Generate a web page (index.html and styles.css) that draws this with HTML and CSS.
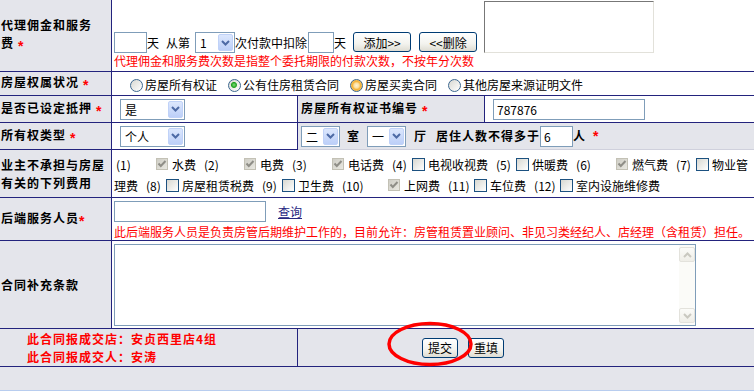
FILE: index.html
```html
<!DOCTYPE html>
<html lang="zh-CN">
<head>
    <meta charset="UTF-8">
    <meta name="viewport" content="width=device-width, initial-scale=1.0">
    <title>合同信息录入</title>
    <link rel="stylesheet" href="styles.css">
</head>
<body>

    <table class="form">
        <colgroup>
            <col class="col-label">
            <col class="col-a">
            <col class="col-b">
            <col>
        </colgroup>

        <!-- 代理佣金和服务费 -->
        <tr class="row-fee">
            <td class="label">代理佣金和服务<br>费<span class="req">*</span></td>
            <td colspan="3" class="fee-cell">
                <div class="fee-line">
                    <input type="text" class="txt days">
                    <span class="word">天</span>
                    <span class="word from">从第</span>
                    <span class="select sel-times">
                        <span class="select-val">1</span>
                        <span class="select-btn"><svg width="9" height="6" viewBox="0 0 9 6"><path d="M1 1l3.5 3.5L8 1"/></svg></span>
                    </span>
                    <span class="word">次付款中扣除</span>
                    <input type="text" class="txt days-short">
                    <span class="word">天</span>
                    <button class="btn btn-add">添加&gt;&gt;</button>
                    <button class="btn btn-del">&lt;&lt;删除</button>
                    <div class="fee-list"></div>
                </div>
                <div class="hint">代理佣金和服务费次数是指整个委托期限的付款次数，不按年分次数</div>
            </td>
        </tr>

        <!-- 房屋权属状况 -->
        <tr class="row-owner">
            <td class="label">房屋权属状况<span class="req">*</span></td>
            <td colspan="3" class="radio-cell">
                <div class="radio-line">
                    <span class="radio"></span><span class="radio-text">房屋所有权证</span>
                    <span class="radio on"></span><span class="radio-text">公有住房租赁合同</span>
                    <span class="radio hover"></span><span class="radio-text">房屋买卖合同</span>
                    <span class="radio"></span><span class="radio-text">其他房屋来源证明文件</span>
                </div>
            </td>
        </tr>

        <!-- 抵押 / 证书编号 -->
        <tr class="row-std">
            <td class="label">是否已设定抵押<span class="req">*</span></td>
            <td class="field">
                <span class="select sel-wide">
                    <span class="select-val">是</span>
                    <span class="select-btn"><svg width="9" height="6" viewBox="0 0 9 6"><path d="M1 1l3.5 3.5L8 1"/></svg></span>
                </span>
            </td>
            <td class="label sub-label">房屋所有权证书编号<span class="req">*</span></td>
            <td class="field">
                <input type="text" class="txt cert" value="787876">
            </td>
        </tr>

        <!-- 所有权类型 / 户型 -->
        <tr class="row-std">
            <td class="label">所有权类型<span class="req">*</span></td>
            <td class="field">
                <span class="select sel-wide">
                    <span class="select-val">个人</span>
                    <span class="select-btn"><svg width="9" height="6" viewBox="0 0 9 6"><path d="M1 1l3.5 3.5L8 1"/></svg></span>
                </span>
            </td>
            <td colspan="2" class="layout-cell">
                <div class="layout-line">
                    <span class="select sel-room">
                        <span class="select-val">二</span>
                        <span class="select-btn"><svg width="9" height="6" viewBox="0 0 9 6"><path d="M1 1l3.5 3.5L8 1"/></svg></span>
                    </span>
                    <span class="bold-word room">室</span>
                    <span class="select sel-room">
                        <span class="select-val">一</span>
                        <span class="select-btn"><svg width="9" height="6" viewBox="0 0 9 6"><path d="M1 1l3.5 3.5L8 1"/></svg></span>
                    </span>
                    <span class="bold-word hall">厅</span>
                    <span class="bold-word people">居住人数不得多于</span>
                    <input type="text" class="txt days" value="6">
                    <span class="bold-word">人</span>
                    <span class="req">*</span>
                </div>
            </td>
        </tr>

        <!-- 业主不承担的费用 -->
        <tr class="row-costs">
            <td class="label">业主不承担与房屋<br>有关的下列费用</td>
            <td colspan="3" class="costs-cell">
                <div class="cost-line">
                    <span class="num first">(1)</span><span class="cb locked"><svg width="10" height="10" viewBox="0 0 10 10"><path d="M1.5 4.5l2.3 2.5L8.5 2"/></svg></span><span class="cost-name">水费</span>
                    <span class="num">(2)</span><span class="cb locked"><svg width="10" height="10" viewBox="0 0 10 10"><path d="M1.5 4.5l2.3 2.5L8.5 2"/></svg></span><span class="cost-name">电费</span>
                    <span class="num">(3)</span><span class="cb locked"><svg width="10" height="10" viewBox="0 0 10 10"><path d="M1.5 4.5l2.3 2.5L8.5 2"/></svg></span><span class="cost-name">电话费</span>
                    <span class="num">(4)</span><span class="cb"></span><span class="cost-name">电视收视费</span>
                    <span class="num">(5)</span><span class="cb"></span><span class="cost-name">供暖费</span>
                    <span class="num">(6)</span><span class="cb locked"><svg width="10" height="10" viewBox="0 0 10 10"><path d="M1.5 4.5l2.3 2.5L8.5 2"/></svg></span><span class="cost-name">燃气费</span>
                    <span class="num">(7)</span><span class="cb"></span><span class="cost-name">物业管</span>
                </div>
                <div class="cost-line">
                    <span class="cost-name wrap">理费</span>
                    <span class="num">(8)</span><span class="cb"></span><span class="cost-name">房屋租赁税费</span>
                    <span class="num">(9)</span><span class="cb"></span><span class="cost-name">卫生费</span>
                    <span class="num wide">(10)</span><span class="cb locked"><svg width="10" height="10" viewBox="0 0 10 10"><path d="M1.5 4.5l2.3 2.5L8.5 2"/></svg></span><span class="cost-name">上网费</span>
                    <span class="num wide">(11)</span><span class="cb"></span><span class="cost-name">车位费</span>
                    <span class="num wide">(12)</span><span class="cb"></span><span class="cost-name">室内设施维修费</span>
                </div>
            </td>
        </tr>

        <!-- 后端服务人员 -->
        <tr class="row-staff">
            <td class="label">后端服务人员<span class="req tight">*</span></td>
            <td colspan="3" class="staff-cell">
                <div class="staff-line">
                    <input type="text" class="txt staff">
                    <a href="#" class="link">查询</a>
                </div>
                <div class="hint">此后端服务人员是负责房管后期维护工作的，目前允许：房管租赁置业顾问、非见习类经纪人、店经理（含租赁）担任。</div>
            </td>
        </tr>

        <!-- 合同补充条款 -->
        <tr class="row-terms">
            <td class="label">合同补充条款</td>
            <td colspan="3" class="terms-cell">
                <div class="memo">
                    <div class="memo-body"></div>
                    <div class="scroll">
                        <span class="scroll-btn"><svg width="9" height="6" viewBox="0 0 9 6"><path d="M1 5l3.5-3.5L8 5"/></svg></span>
                        <span class="scroll-track"></span>
                        <span class="scroll-btn"><svg width="9" height="6" viewBox="0 0 9 6"><path d="M1 1l3.5 3.5L8 1"/></svg></span>
                    </div>
                </div>
            </td>
        </tr>

        <!-- 提交 -->
        <tr class="row-submit">
            <td colspan="2" class="deal-info">此合同报成交店：安贞西里店4组<br>此合同报成交人：安涛</td>
            <td colspan="2" class="actions">
                <div class="action-btns">
                    <button class="btn btn-small">提交</button>
                    <button class="btn btn-small">重填</button>
                    <svg class="mark" width="90" height="48" viewBox="0 0 90 48"><ellipse cx="43" cy="23" rx="41" ry="20.5"/></svg>
                </div>
            </td>
        </tr>

        <tr class="row-end">
            <td colspan="4"></td>
        </tr>
    </table>

</body>
</html>
```

FILE: styles.css
```css
html {
    overflow: hidden;
}
body {
    margin: 0;
    font-family: SimSun, "Noto Sans CJK SC", sans-serif;
    font-size: 12px;
    color: #000;
    background-color: #fff;
}

/* table frame */
.form {
    width: 760px;
    border-collapse: separate;
    border-spacing: 0;
    table-layout: fixed;
}
.col-label {
    width: 112px;
}
.col-a {
    width: 186px;
}
.col-b {
    width: 187px;
}
.form td {
    box-sizing: border-box;
    padding: 0 0 0 2px;
    border-right: 1px solid #23237d;
    border-bottom: 1px solid #23237d;
    background-color: #fff;
    vertical-align: middle;
    white-space: nowrap;
}
.form td.label {
    padding-left: 1px;
    background-color: #e4e5eb;
    font-size: 12px;
    font-weight: bold;
    letter-spacing: 1px;
    line-height: 18px;
}
.form td.sub-label {
    padding-left: 3px;
}
.row-fee td { height: 72px; }
.row-owner td { height: 24px; }
.row-std td { height: 27px; }
.row-costs td { height: 48px; }
.row-staff td { height: 43px; }
.row-terms td { height: 88px; }
.row-submit td { height: 38px; }
.row-end td {
    height: 24px;
    background-color: #e4e5eb;
    border-bottom-color: #b8cdef;
}

.req {
    margin-left: 4px;
    color: #f00;
    font-family: "Liberation Sans", sans-serif;
    font-size: 14px;
    font-weight: bold;
    letter-spacing: 0;
    vertical-align: -3px;
}
.req.tight {
    margin-left: 0;
}

.hint {
    color: #f00;
    line-height: 16px;
}

/* XP style controls */
.txt {
    box-sizing: border-box;
    height: 21px;
    margin: 0;
    padding: 0 0 0 3px;
    border: 1px solid #7f9db9;
    background-color: #fff;
    font-family: SimSun, "Noto Sans CJK SC", sans-serif;
    font-size: 12px;
    color: #000;
    vertical-align: middle;
}
.txt.days { width: 33px; }
.txt.days-short { width: 26px; margin-left: 1px; }
.txt.cert { width: 152px; }
.txt.staff { width: 152px; }

.select {
    display: inline-flex;
    box-sizing: border-box;
    height: 21px;
    border: 1px solid #7f9db9;
    background-color: #fff;
    vertical-align: middle;
}
.select-val {
    flex: 1;
    padding-left: 4px;
    line-height: 19px;
}
.select-btn {
    display: flex;
    align-items: center;
    justify-content: center;
    box-sizing: border-box;
    width: 15px;
    margin: 1px;
    border: 1px solid #c0d2f8;
    border-radius: 2px;
    background: linear-gradient(#dce7fd, #bccff8);
}
.select-btn path {
    fill: none;
    stroke: #4d6aa5;
    stroke-width: 2;
}
.sel-times { width: 40px; margin-left: 5px; }
.sel-wide { width: 65px; }
.sel-room { width: 39px; }

.btn {
    box-sizing: border-box;
    height: 20px;
    margin: 0;
    padding: 0;
    border: 1px solid #003c74;
    border-radius: 3px;
    background: linear-gradient(#fff, #f3f3ee 60%, #dedcd2);
    font-family: SimSun, "Noto Sans CJK SC", sans-serif;
    font-size: 12px;
    color: #000;
}
.btn-add { width: 58px; margin-left: 7px; margin-bottom: 1px; }
.btn-del { width: 58px; margin-left: 8px; margin-bottom: 1px; }
.btn-small { width: 36px; }
.btn-small + .btn-small { margin-left: 10px; }

/* row: fee */
.fee-cell {
    vertical-align: top !important;
    padding-top: 1px !important;
}
.fee-line {
    display: flex;
    align-items: flex-end;
}
.word {
    line-height: 21px;
}
.word.from {
    margin-left: 7px;
}
.fee-list {
    box-sizing: border-box;
    width: 170px;
    height: 52px;
    margin-left: 7px;
    border: 1px solid;
    border-color: #777 #e2e1da #e2e1da #777;
    background-color: #fff;
}

/* row: owner radios */
.radio-cell {
    padding: 3px 0 0 18px !important;
}
.radio-line {
    display: flex;
    align-items: center;
}
.radio {
    box-sizing: border-box;
    width: 13px;
    height: 13px;
    border: 1px solid #3d6890;
    border-radius: 50%;
    background: linear-gradient(135deg, #d8d8d2, #fff);
}
.radio.on {
    background: radial-gradient(circle at 45% 45%, #7ee07a 0, #21a121 2.5px, transparent 3.5px), linear-gradient(135deg, #d8d8d2, #fff);
}
.radio.hover {
    background: radial-gradient(circle, #fdf3d6 0, #fbe0a0 2.5px, #f5b43c 4px, #f8c25a 5.5px);
}
.radio-text {
    margin: 0 11px 0 2px;
    line-height: 16px;
}

/* row: fields */
.field {
    padding-left: 8px !important;
}

.layout-cell {
    padding-left: 3px !important;
    background-color: #e4e5eb !important;
    border-bottom-color: #cfd0dc !important;
}
.layout-line {
    display: flex;
    align-items: center;
}
.bold-word {
    font-size: 12px;
    font-weight: bold;
    letter-spacing: 1px;
    line-height: 18px;
}
.bold-word.room { margin: 0 7px; }
.bold-word.hall { margin-left: 8px; }
.bold-word.people { margin-left: 9px; margin-right: 0; }
.layout-line .req { margin-left: 7px; }

/* row: costs checkboxes */
.costs-cell {
    vertical-align: top !important;
    padding-top: 4px !important;
}
.cost-line {
    display: flex;
    align-items: center;
    height: 21px;
}
.num {
    display: inline-block;
    width: 18px;
    margin-left: 8px;
    line-height: 16px;
}
.num.first { margin-left: 2px; }
.num.wide { width: 24px; }
.cb {
    display: inline-flex;
    align-items: center;
    justify-content: center;
    box-sizing: border-box;
    width: 13px;
    height: 13px;
    margin-left: 2px;
    border: 1px solid #1c5180;
    background: linear-gradient(135deg, #d8d8d1, #fff);
}
.cb.locked {
    width: 12px;
    height: 12px;
    margin-left: 22px;
    margin-top: -2px;
    border-color: #c3c1b5;
    background: linear-gradient(135deg, #cfcec6, #e9e8e1);
}
.cb path {
    fill: none;
    stroke: #8f8e87;
    stroke-width: 2;
}
.cost-name {
    margin-left: 3px;
    line-height: 16px;
}
.cb.locked + .cost-name { margin-left: 4px; }
.cost-name.wrap { margin-left: 0; }

/* row: staff */
.staff-cell {
    vertical-align: top !important;
    padding-top: 3px !important;
}
.staff-line {
    display: flex;
    align-items: center;
}
.link {
    margin-left: 12px;
    color: #27277f;
    text-decoration: underline;
}
.staff-cell .hint {
    margin-top: 2px;
}

/* row: terms */
.terms-cell {
    vertical-align: top !important;
    padding-top: 3px !important;
}
.memo {
    display: flex;
    box-sizing: border-box;
    width: 582px;
    height: 82px;
    border: 1px solid #7f9db9;
    background-color: #fff;
}
.memo-body {
    flex: 1;
}
.scroll {
    display: flex;
    flex-direction: column;
    width: 16px;
    padding: 2px 0;
    background-color: #fbfbf8;
}
.scroll-track {
    flex: 1;
}
.scroll-btn {
    display: flex;
    align-items: center;
    justify-content: center;
    box-sizing: border-box;
    height: 15px;
    border: 1px solid #e3e2dc;
    border-radius: 2px;
    background: linear-gradient(#fbfbf8, #efeee8);
}
.scroll-btn path {
    fill: none;
    stroke: #c9c8c0;
    stroke-width: 2;
}

/* row: submit */
.deal-info {
    padding-left: 27px !important;
    background-color: #e4e5eb !important;
    color: #f00;
    font-size: 12px;
    font-weight: bold;
    letter-spacing: 1px;
    line-height: 18px;
}
.actions {
    padding-left: 124px !important;
    background-color: #e4e5eb !important;
}
.action-btns {
    position: relative;
    display: flex;
}
.mark {
    position: absolute;
    left: -35px;
    top: -17px;
    overflow: visible;
}
.mark ellipse {
    fill: none;
    stroke: #f00;
    stroke-width: 3.5;
}
```
